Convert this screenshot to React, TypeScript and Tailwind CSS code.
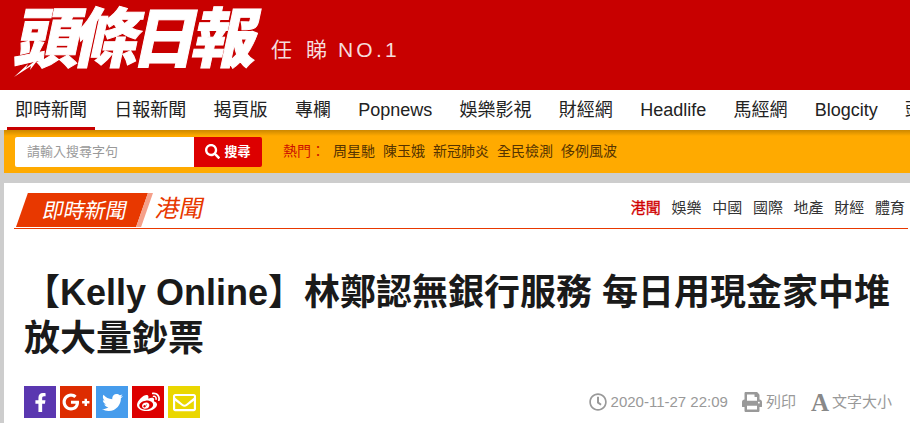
import { FaFacebookF, FaGooglePlusG, FaPrint, FaRegClock, FaRegEnvelope, FaSearch, FaTwitter, FaWeibo } from 'react-icons/fa';

const cjk = { fontFamily: '"Liberation Sans", "Noto Sans CJK TC", sans-serif' };

const navItems = ['日報新聞', '揭頁版', '專欄', 'Popnews', '娛樂影視', '財經網', 'Headlife', '馬經網', 'Blogcity', '頭條'];
const hotItems = ['周星馳', '陳玉娥', '新冠肺炎', '全民檢測', '侈例風波'];
const sections = ['娛樂', '中國', '國際', '地產', '財經', '體育'];

const shareButtons = [
  { icon: <FaFacebookF size={19} />, bg: 'bg-[#5a37b0]' },
  { icon: <FaGooglePlusG size={28} />, bg: 'bg-[#dd2c00]' },
  { icon: <FaTwitter size={21} />, bg: 'bg-[#469cec]' },
  { icon: <FaWeibo size={23} />, bg: 'bg-[#dd0000]' },
  { icon: <FaRegEnvelope size={23} />, bg: 'bg-[#ead700]' },
];

export default function App() {
  return (
    <div className="h-[423px] w-[910px] overflow-hidden bg-[#cdcdcd] whitespace-nowrap" style={cjk}>
      {/* header */}
      <div className="flex h-[90px] items-start bg-[#c80000] pl-[15px] text-white">
        <div className="relative mt-[1px] h-[78px] w-[240px] shrink-0">
          <div className="ml-[2px] origin-left -skew-x-12 text-[65px] leading-[78px] font-black tracking-[-6px] [-webkit-text-stroke:1px_white]">頭條日報</div>
          {/* little lightning flash under the logo */}
          <svg className="absolute top-[56px] left-[-1px]" width="26" height="20" viewBox="0 0 26 20">
            <path d="M0 20 L14 7 L12 11 L26 0 L16 13 L17 9 Z" fill="#fff" />
          </svg>
        </div>
        <div className="mt-[34px] ml-[16px] flex text-[21px] leading-[32px] text-[#f5dcdc]">
          <span>任</span>
          <span className="ml-[14px]">睇</span>
          <span className="ml-[11px] tracking-[3.2px]">NO.1</span>
        </div>
      </div>

      {/* nav */}
      <div className="flex h-[40px] gap-[27.3px] bg-white pl-[15px] text-[18px] text-[#222]">
        <div className="mx-[-8px] flex h-[40px] shrink-0 items-center border-b-[3px] border-[#c80000] px-[8px] pt-[3px]">即時新聞</div>
        {navItems.map((item) => (
          <div key={item} className="flex shrink-0 items-center">{item}</div>
        ))}
      </div>

      {/* search bar */}
      <div className="ml-[4px] flex h-[43px] items-center bg-[#ffaa00] bg-gradient-to-b from-[#cc8800] to-[#ffaa00] to-[6px] pl-[11px]">
        <div className="flex h-[30px] w-[179px] items-center rounded-l-[2px] bg-white pl-[12px] text-[13px] text-[#999]">請輸入搜尋字句</div>
        <div className="flex h-[30px] w-[68px] items-center justify-center gap-[4px] rounded-r-[2px] bg-[#dd0000] text-[13px] font-bold text-white">
          <FaSearch size={15} />
          搜尋
        </div>
        <div className="ml-[21px] text-[14px] text-[#cc1100]">熱門：</div>
        <div className="ml-[8px] flex gap-[8px] text-[14px] text-[#553300]">
          {hotItems.map((item) => (
            <span key={item}>{item}</span>
          ))}
        </div>
      </div>

      {/* article */}
      <div className="mt-[10px] ml-[4px] h-[240px] bg-white">
        <div className="mr-[2px] ml-[10px] flex h-[46px] items-end border-b border-[#e83800] pt-[10px]">
          <div className="mb-[1px] ml-[2px] flex h-[34px] w-[132px] shrink-0 items-center justify-center bg-[#e83800] pt-[2px] pl-[6px] text-[21px] text-white [clip-path:polygon(9%_0,100%_0,91%_100%,0_100%)]">
            <span className="-skew-x-12">即時新聞</span>
          </div>
          <div className="mb-[1px] ml-[-12px] h-[34px] w-[17px] shrink-0 bg-[#f5a08a] [clip-path:polygon(70%_0,100%_0,30%_100%,0_100%)]" />
          <div className="mb-[1px] ml-[3px] -skew-x-12 text-[24px] text-[#e83800]">港聞</div>
          <div className="mb-[9px] ml-auto flex gap-[10.7px] pr-[3px] text-[15px] text-[#333]">
            <span className="text-[#d00000] [-webkit-text-stroke:0.3px_#d00000]">港聞</span>
            {sections.map((item) => (
              <span key={item}>{item}</span>
            ))}
          </div>
        </div>

        <h1 className="mt-[41px] mr-[16px] ml-[20px] text-[36px] leading-[46px] font-bold whitespace-normal text-[#1a1a1a]">
          【Kelly Online】林鄭認無銀行服務 每日用現金家中堆放大量鈔票
        </h1>

        <div className="mt-[24px] ml-[20px] flex items-center pr-[18px]">
          <div className="flex gap-[4px]">
            {shareButtons.map((button, i) => (
              <div key={i} className={`flex h-[32px] w-[32px] items-center justify-center text-white ${button.bg}`}>
                {button.icon}
              </div>
            ))}
          </div>
          <div className="ml-auto flex items-center text-[15px] text-[#999]">
            <FaRegClock size={18} />
            <span className="ml-[4px]">2020-11-27 22:09</span>
            <FaPrint size={20} className="ml-[14px]" />
            <span className="ml-[4px]">列印</span>
            <span className="ml-[15px] text-[25px] leading-[25px] font-bold text-[#888]" style={{ fontFamily: '"Liberation Serif", serif' }}>A</span>
            <span className="ml-[3px]">文字大小</span>
          </div>
        </div>
      </div>
    </div>
  );
}
